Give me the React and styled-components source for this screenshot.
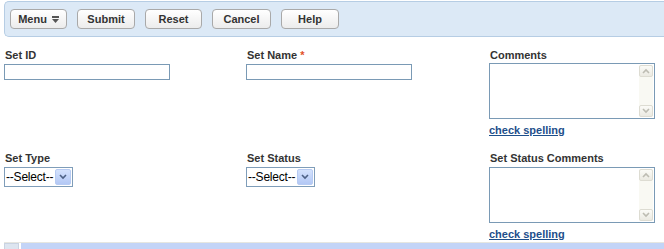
import React from 'react';
import styled, { createGlobalStyle } from 'styled-components';

const GlobalStyle = createGlobalStyle`
  body {
    margin: 0;
    background: #fff;
    font-family: "Liberation Sans", Arial, sans-serif;
    color: #333;
    overflow: hidden;
  }
`;

const Page = styled.div`
  width: 664px;
  height: 249px;
  padding-top: 1px;
  box-sizing: border-box;
  display: flex;
  flex-direction: column;
`;

const Toolbar = styled.div`
  margin-left: 4px;
  height: 36px;
  box-sizing: border-box;
  background: #dce9f6;
  border: 1px solid #b6cde4;
  border-right: none;
  border-radius: 5px 0 0 5px;
  display: flex;
  align-items: center;
  gap: 10px;
  padding-left: 5px;
`;

const ToolButton = styled.button`
  height: 20px;
  width: ${props => props.w || 58}px;
  box-sizing: border-box;
  border: 1px solid #a9a9a9;
  border-radius: 4px;
  background: linear-gradient(#ffffff, #ececec);
  font-family: "Liberation Sans", Arial, sans-serif;
  font-size: 11px;
  font-weight: bold;
  color: #333;
  padding: 0;
  display: flex;
  align-items: center;
  justify-content: center;
  gap: 5px;
`;

const Form = styled.div`
  display: grid;
  grid-template-columns: 242px 243px 175px;
  row-gap: 15px;
  padding: 12px 0 0 4px;
`;

const Field = styled.div`
  display: flex;
  flex-direction: column;
  align-items: flex-start;
`;

const Label = styled.div`
  font-size: 11px;
  font-weight: bold;
  line-height: 13px;
  margin: 0 0 ${props => props.gap || 2}px 1px;
  color: #333;
`;

const Required = styled.span`
  color: #e2502a;
  margin-left: 3px;
`;

const TextInput = styled.div`
  width: 166px;
  height: 16px;
  box-sizing: border-box;
  border: 1px solid #7a9ab5;
  background: #fff;
`;

const SelectBox = styled.div`
  width: 69px;
  height: 20px;
  box-sizing: border-box;
  border: 1px solid #7f9db9;
  display: flex;
  align-items: stretch;
  background: #fff;
`;

const SelectText = styled.span`
  flex: 1;
  font-size: 12px;
  line-height: 18px;
  padding-left: 1px;
  color: #000;
  white-space: nowrap;
  letter-spacing: -0.2px;
`;

const SelectArrow = styled.span`
  width: 16px;
  margin: 1px;
  border-radius: 2px;
  background: linear-gradient(#d4e2fd, #b3c8f5);
  border: 1px solid #b7cbf3;
  box-sizing: border-box;
  display: flex;
  align-items: center;
  justify-content: center;
`;

const TextArea = styled.div`
  width: 166px;
  height: ${props => props.h}px;
  box-sizing: border-box;
  border: 1px solid #7a9ab5;
  display: flex;
  justify-content: flex-end;
  background: #fff;
`;

const ScrollColumn = styled.div`
  width: 14px;
  margin: 1px 1px 1px 0;
  background: #f9f9f3;
  display: flex;
  flex-direction: column;
  justify-content: space-between;
`;

const ScrollButton = styled.div`
  height: 12px;
  box-sizing: border-box;
  border: 1px solid #dddcd2;
  border-radius: 2px;
  background: linear-gradient(#fbfbf7, #ebeae2);
  display: flex;
  align-items: center;
  justify-content: center;
`;

const SpellLink = styled.a`
  margin-top: 5px;
  font-size: 11px;
  font-weight: bold;
  line-height: 13px;
  color: #1e4f8b;
  text-decoration: underline;
  cursor: pointer;
`;

const HScroll = styled.div`
  margin-top: auto;
  margin-left: 4px;
  height: 6px;
  border-top: 1px solid #e6e6e0;
  display: flex;
  gap: 2px;
`;

const HScrollButton = styled.div`
  width: 15px;
  background: #dde5f0;
  border: 1px solid #c9d3e2;
  border-bottom: none;
  box-sizing: border-box;
`;

const HScrollTrack = styled.div`
  flex: 1;
  background: #c3d4f7;
`;

const MenuArrow = () => (
  <svg width="7" height="7" viewBox="0 0 7 7">
    <rect x="0" y="0" width="7" height="2" fill="#555" />
    <path d="M0 3 L7 3 L3.5 7 Z" fill="#555" />
  </svg>
);

const Chevron = ({ up, color = '#4d6185' }) => (
  <svg width="8" height="6" viewBox="0 0 8 6">
    <path
      d={up ? 'M1 5 L4 2 L7 5' : 'M1 1 L4 4 L7 1'}
      stroke={color}
      strokeWidth="1.6"
      fill="none"
    />
  </svg>
);

const Select = () => (
  <SelectBox>
    <SelectText>--Select--</SelectText>
    <SelectArrow>
      <Chevron />
    </SelectArrow>
  </SelectBox>
);

const CommentBox = ({ h }) => (
  <TextArea h={h}>
    <ScrollColumn>
      <ScrollButton><Chevron up color="#bdbcb2" /></ScrollButton>
      <ScrollButton><Chevron color="#bdbcb2" /></ScrollButton>
    </ScrollColumn>
  </TextArea>
);

const App = () => (
  <Page>
    <GlobalStyle />
    <Toolbar>
      <ToolButton w={57}>Menu <MenuArrow /></ToolButton>
      <ToolButton>Submit</ToolButton>
      <ToolButton w={57}>Reset</ToolButton>
      <ToolButton w={59}>Cancel</ToolButton>
      <ToolButton>Help</ToolButton>
    </Toolbar>

    <Form>
      <Field>
        <Label>Set ID</Label>
        <TextInput />
      </Field>
      <Field>
        <Label>Set Name<Required>*</Required></Label>
        <TextInput />
      </Field>
      <Field>
        <Label gap={1}>Comments</Label>
        <CommentBox h={56} />
        <SpellLink>check spelling</SpellLink>
      </Field>

      <Field>
        <Label>Set Type</Label>
        <Select />
      </Field>
      <Field>
        <Label>Set Status</Label>
        <Select />
      </Field>
      <Field>
        <Label gap={2}>Set Status Comments</Label>
        <CommentBox h={56} />
        <SpellLink>check spelling</SpellLink>
      </Field>
    </Form>

    <HScroll>
      <HScrollButton />
      <HScrollTrack />
    </HScroll>
  </Page>
);

export default App;
